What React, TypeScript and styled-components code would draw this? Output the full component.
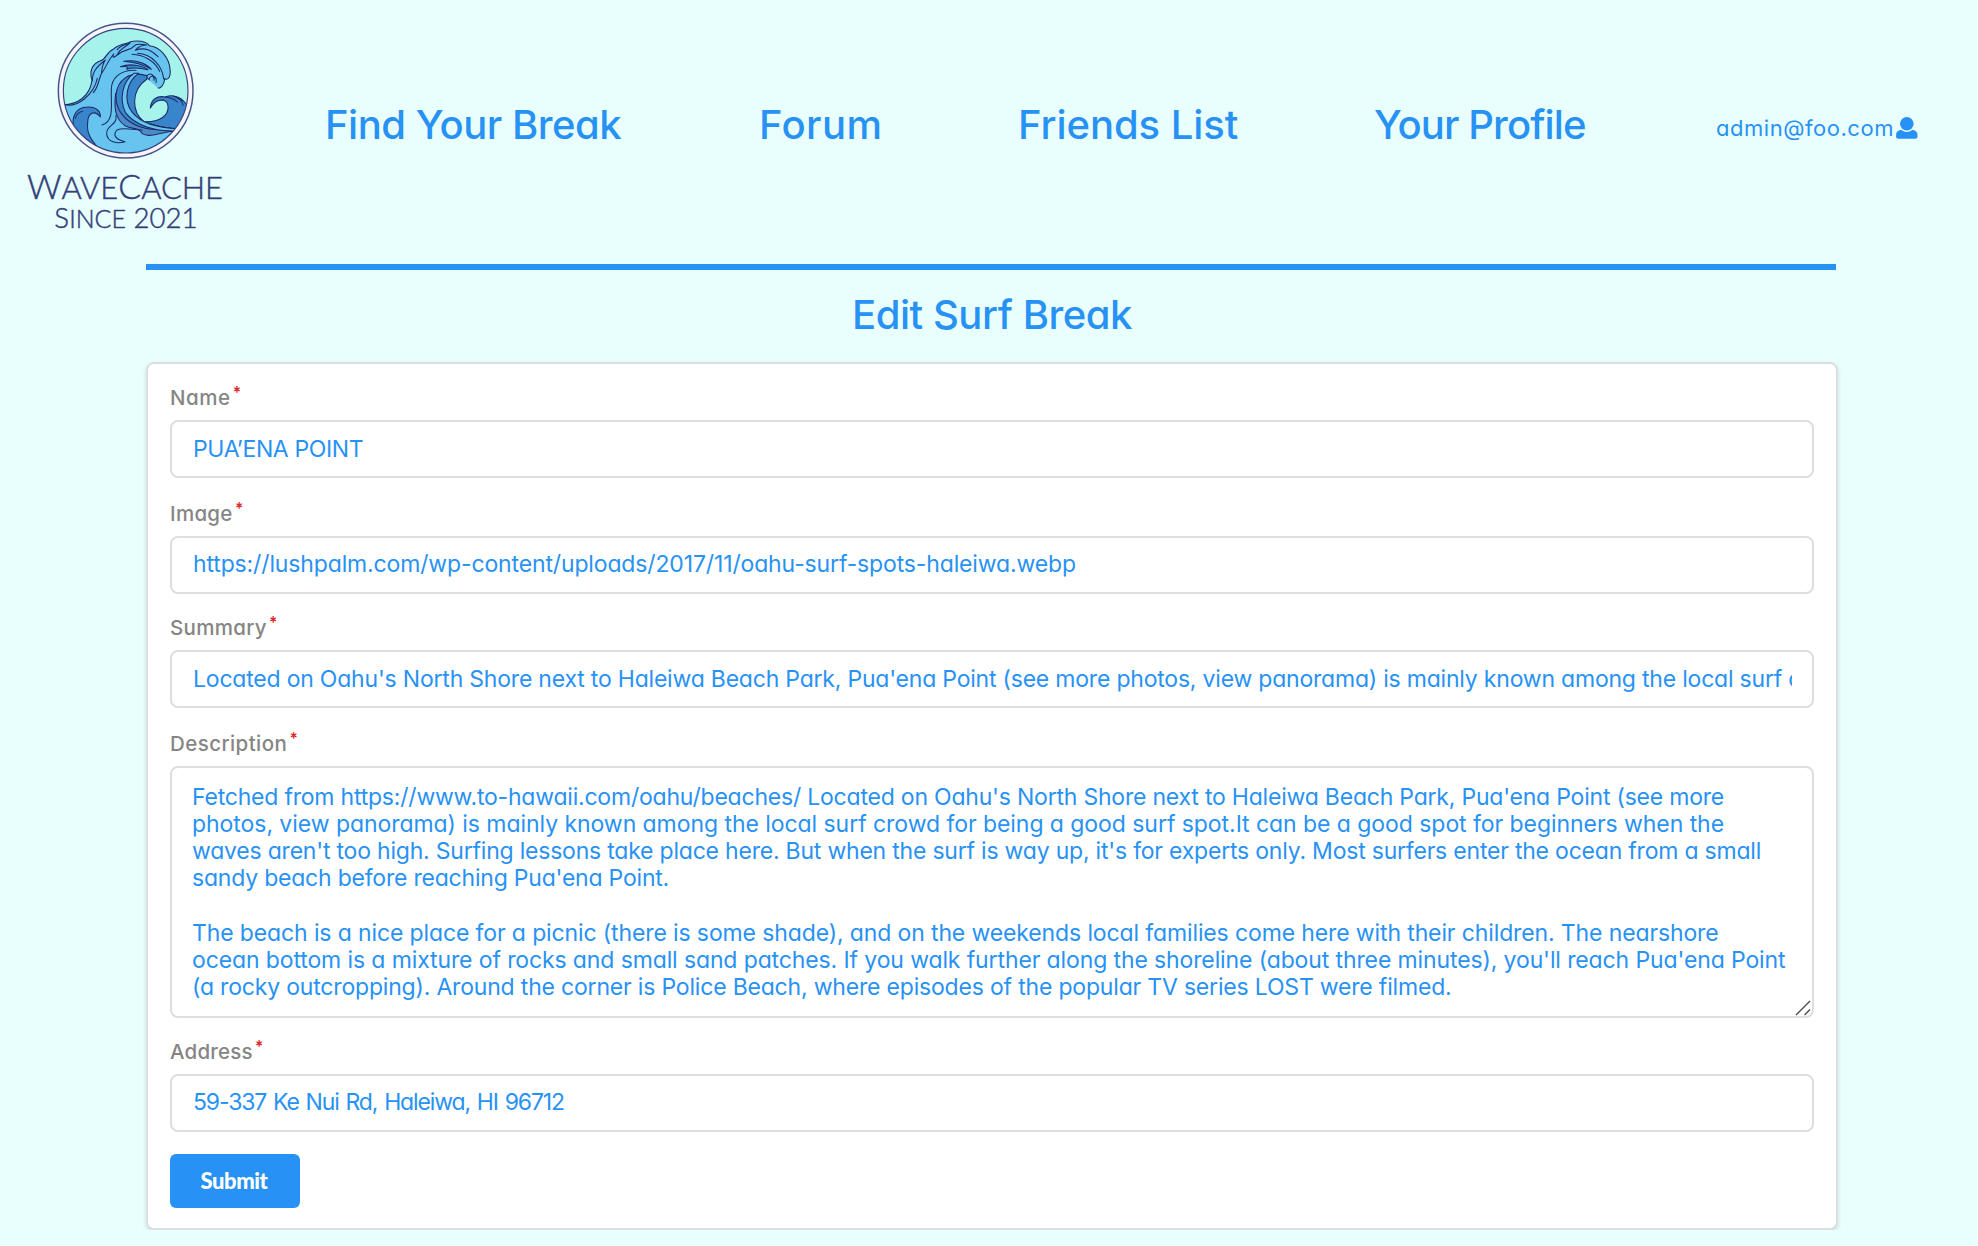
import React from "react";
import styled, { createGlobalStyle } from "styled-components";

const BLUE = "#2892f4";
const NAVY = "#1d2a63";

const GlobalStyle = createGlobalStyle`
  * { box-sizing: border-box; }
  body {
    margin: 0;
    background: #e8fffe;
    color: ${BLUE};
    font-family: Inter, "Liberation Sans", sans-serif;
    font-feature-settings: "cv11";
  }
`;

const Header = styled.header`
  display: flex;
  height: 264px;
  padding: 10px 0 0 10px;
`;

const Logo = styled.svg`
  display: block;
  width: 240px;
  height: 240px;
  flex: none;
`;

const Nav = styled.nav`
  display: grid;
  grid-template-columns: 434px 259px 356px 342px 1fr;
  align-items: baseline;
  align-content: start;
  flex: 1;
  padding: 91px 0 0 75px;
`;

const NavLink = styled.a<{ $tracking: number }>`
  font-size: 40px;
  font-weight: 500;
  line-height: 48px;
  letter-spacing: ${(p) => p.$tracking}px;
  white-space: nowrap;
`;

const Account = styled.a`
  display: flex;
  align-items: baseline;
  font-size: 22px;
  line-height: 28px;
  letter-spacing: 0.53px;
  position: relative;
  top: -3px;
`;

const UserIcon = styled.svg`
  width: 22px;
  height: 22px;
  margin-left: 2px;
  position: relative;
  top: 3px;
`;

const Main = styled.main`
  width: 1692px;
  margin-left: 146px;
`;

const Rule = styled.hr`
  width: 1690px;
  height: 6px;
  margin: 0;
  border: 0;
  background: ${BLUE};
`;

const Title = styled.h2`
  margin: 21px 0 23px;
  font-size: 40px;
  font-weight: 500;
  line-height: 48px;
  letter-spacing: -0.44px;
  text-align: center;
`;

const Card = styled.form`
  height: 868px;
  padding: 18px 22px;
  border: 2px solid #dddfdf;
  border-radius: 8px;
  background: #fff;
  box-shadow: 0 2px 4px rgba(34, 36, 38, 0.15);
`;

const Field = styled.div<{ $gap: number }>`
  margin-bottom: ${(p) => p.$gap}px;
`;

const Label = styled.label<{ $tracking: number }>`
  display: flex;
  height: 38px;
  padding-top: 3px;
  color: #858585;
  font-size: 20.5px;
  font-weight: 500;
  line-height: 26px;
  letter-spacing: ${(p) => p.$tracking}px;

  &::after {
    content: "*";
    margin: -5px 0 0 2.5px;
    color: #db2828;
    font-family: Lato, sans-serif;
    font-size: 18.5px;
    font-weight: 900;
    letter-spacing: 0;
  }
`;

const Box = styled.div`
  border: 2px solid #dddfdf;
  border-radius: 8px;
  background: #fff;
  font-size: 23px;
  white-space: pre;
`;

const Input = styled(Box)<{ $rise?: number }>`
  height: 58px;
  padding: 0 20px 0 21px;
  line-height: ${(p) => 54 - (p.$rise ?? 0) * 2}px;
`;

const Clip = styled.div`
  height: 54px;
  overflow: hidden;
`;

const TextArea = styled(Box)`
  position: relative;
  height: 252px;
  padding: 16px 20px;
  line-height: 27.15px;
`;

const Line = styled.div<{ $tracking: number }>`
  min-height: 27.15px;
  letter-spacing: ${(p) => p.$tracking}px;
`;

const SpacedLine = styled(Line)`
  word-spacing: 1.5px;
`;

const Grip = styled.svg`
  position: absolute;
  right: 1px;
  bottom: 0;
  width: 16px;
  height: 16px;
`;

const Submit = styled.button`
  display: block;
  width: 130px;
  height: 54px;
  padding: 0 2px 1px 0;
  border: 0;
  border-radius: 6px;
  background: ${BLUE};
  color: #fff;
  font-family: Lato, sans-serif;
  font-size: 22px;
  font-weight: 900;
  letter-spacing: -0.45px;
`;

const navItems = [
  { text: "Find Your Break", tracking: -0.48 },
  { text: "Forum", tracking: 0.4 },
  { text: "Friends List", tracking: -0.05 },
  { text: "Your Profile", tracking: -0.88 },
];

const description = [
  { text: "Fetched from https://www.to-hawaii.com/oahu/beaches/ Located on Oahu's North Shore next to Haleiwa Beach Park, Pua'ena Point (see more", tracking: -0.21 },
  { text: "photos, view panorama) is mainly known among the local surf crowd for being a good surf spot.It can be a good spot for beginners when the", tracking: -0.054 },
  { text: "waves aren't too high. Surfing lessons take place here. But when the surf is way up, it's for experts only. Most surfers enter the ocean from a small", tracking: -0.21 },
  { text: "sandy beach before reaching Pua'ena Point.", tracking: -0.211 },
  { text: "", tracking: 0 },
  { text: "The beach is a nice place for a picnic (there is some shade), and on the weekends local families come here with their children. The nearshore", tracking: -0.123 },
  { text: "ocean bottom is a mixture of rocks and small sand patches. If you walk further along the shoreline (about three minutes), you'll reach Pua'ena Point", tracking: -0.117 },
  { text: "(a rocky outcropping). Around the corner is Police Beach, where episodes of the popular TV series LOST were filmed.", tracking: -0.187 },
];

function WaveLogo() {
  return (
    <Logo viewBox="0 0 720 720" role="img" aria-label="WaveCache">
      <defs>
        <clipPath id="disc">
          <circle cx="347" cy="242" r="187" />
        </clipPath>
      </defs>
      <circle cx="347" cy="242" r="202" fill="#f6f4fb" stroke="#4b5488" strokeWidth="4.5" />
      <circle cx="347" cy="242" r="187" fill="#a5f3ea" />
      <g clipPath="url(#disc)" stroke={NAVY} strokeWidth="3.2" strokeLinejoin="round" strokeLinecap="round">
        <path
          fill="#66c4ee"
          d="M150 284C205 288 240 255 246 211C237 184 247 161 270 153C291 148 285 128 312 116C331 99 354 102 360 96C381 89 409 94 418 107C450 109 478 145 480 177C483 199 476 212 464 206C463 224 452 239 438 234C424 235 416 224 417 208C400 192 382 190 372 220C360 270 372 320 405 338L540 350L520 450H150Z"
        />
        <path
          fill="#a5f3ea"
          stroke="none"
          d="M412 206C362 240 360 308 403 336C448 337 477 317 474 288L450 240Z"
        />
        <path
          fill="#3985cb"
          d="M421 294C423 269 440 256 466 261C491 251 520 263 534 292L510 358C465 354 428 345 403 335C448 337 477 317 474 288C472 264 438 263 421 294Z"
        />
        <path fill="none" d="M466 261C482 263 493 266 502 276M490 258C508 264 518 275 519 286" />
        <path
          fill="#4f8ac8"
          d="M317 250C312 292 314 325 345 347C369 360 386 350 397 371C418 385 445 367 500 362C430 360 350 330 317 250Z"
        />
        <path
          fill="#3985cb"
          d="M411 197C360 181 322 210 318 254C316 298 342 334 390 350C440 365 480 359 500 357C454 352 425 346 402 335C366 308 360 242 411 207Z"
        />
        <path
          fill="#66c4ee"
          d="M372 190C335 216 328 270 346 307C375 348 440 364 494 363L504 356C450 354 395 342 367 307C338 270 350 215 386 190Z"
        />
        <path
          fill="#3985cb"
          d="M192 354C183 322 197 291 232 291C261 290 272 306 271 321C254 299 234 308 233 337C229 370 243 390 270 420C230 410 202 380 192 354Z"
        />
        <path fill="none" d="M196 325C200 311 208 306 218 304M152 281C203 302 253 248 262 205" />
        <path
          fill="none"
          d="M378 181C326 180 304 207 304 239C302 281 315 333 276 345M318 316C323 348 288 343 290 371C292 397 322 402 345 395C319 389 306 376 321 360C342 350 373 361 396 360"
        />
        <path
          fill="none"
          d="M247 212C247 184 260 171 286 150C275 166 276 183 274 191C289 172 291 155 311 132C304 149 319 140 327 128M274 191C266 207 267 228 250 248M322 119C330 105 348 105 360 99C352 109 324 118 323 135C344 113 355 128 378 104C389 100 400 105 410 105C392 105 382 113 376 121C405 110 424 121 444 140"
        />
        <path
          fill="#3985cb"
          d="M341 154C370 148 407 157 424 178C400 164 369 156 341 154ZM331 170C359 160 397 165 414 179C388 173 364 173 350 178C358 170 345 168 331 170Z"
        />
        <path
          fill="none"
          d="M383 130C424 132 457 166 461 207M366 133C398 134 433 151 449 184M411 197C422 186 434 196 432 211M417 208C420 192 443 197 438 218"
        />
      </g>
      <circle cx="347" cy="242" r="187" fill="none" stroke="#36447c" strokeWidth="3.5" />
      <g fill="#343f78" stroke="#343f78" strokeWidth="1.4" fontFamily="Lato, sans-serif" fontWeight="300">
        <text x="51" y="568" fontSize="102" textLength="588" lengthAdjust="spacingAndGlyphs">
          W<tspan fontSize="93">AVE</tspan>C<tspan fontSize="93">ACHE</tspan>
        </text>
        <text x="133" y="654" fontSize="84" textLength="430" lengthAdjust="spacingAndGlyphs">
          S<tspan fontSize="76">INCE</tspan> 2021
        </text>
      </g>
    </Logo>
  );
}

export default function App() {
  return (
    <>
      <GlobalStyle />
      <Header>
        <WaveLogo />
        <Nav>
          {navItems.map((item) => (
            <NavLink key={item.text} $tracking={item.tracking}>
              {item.text}
            </NavLink>
          ))}
          <Account>
            admin@foo.com
            <UserIcon viewBox="0 0 22 22" fill={BLUE}>
              <circle cx="10.8" cy="6.8" r="6.8" />
              <path d="M5.5 13.1C7 14.4 9 14.9 10.8 14.9S14.6 14.4 16.1 13.1C19 13.1 21.5 14.8 21.5 18V19.6C21.5 21 20.8 21.7 19.5 21.7H2.1C.8 21.7.1 21 .1 19.6V18C.1 14.8 2.6 13.1 5.5 13.1Z" />
            </UserIcon>
          </Account>
        </Nav>
      </Header>
      <Main>
        <Rule />
        <Title>Edit Surf Break</Title>
        <Card>
          <Field $gap={20}>
            <Label $tracking={0.5}>Name</Label>
            <Input>
              <Line $tracking={-0.362}>PUA’ENA POINT</Line>
            </Input>
          </Field>
          <Field $gap={18}>
            <Label $tracking={0.3}>Image</Label>
            <Input $rise={1}>
              <Line $tracking={-0.14}>https://lushpalm.com/wp-content/uploads/2017/11/oahu-surf-spots-haleiwa.webp</Line>
            </Input>
          </Field>
          <Field $gap={20}>
            <Label $tracking={0.3}>Summary</Label>
            <Input>
              <Clip>
                <Line $tracking={-0.206}>
                  Located on Oahu's North Shore next to Haleiwa Beach Park, Pua'ena Point (see more photos, view panorama) is mainly known among the local surf crowd
                </Line>
              </Clip>
            </Input>
          </Field>
          <Field $gap={18}>
            <Label $tracking={0.42}>Description</Label>
            <TextArea>
              {description.map((line, i) => (
                <Line key={i} $tracking={line.tracking}>
                  {line.text}
                </Line>
              ))}
              <Grip viewBox="0 0 16 16" fill="none" stroke="#4a4a4a" strokeWidth="1.4">
                <path d="M1 15L15 1M9.5 15L15 9.5" />
              </Grip>
            </TextArea>
          </Field>
          <Field $gap={22}>
            <Label $tracking={0.2}>Address</Label>
            <Input $rise={1}>
              <SpacedLine $tracking={-1.13}>59-337 Ke Nui Rd, Haleiwa, HI 96712</SpacedLine>
            </Input>
          </Field>
          <Submit type="button">Submit</Submit>
        </Card>
      </Main>
    </>
  );
}
